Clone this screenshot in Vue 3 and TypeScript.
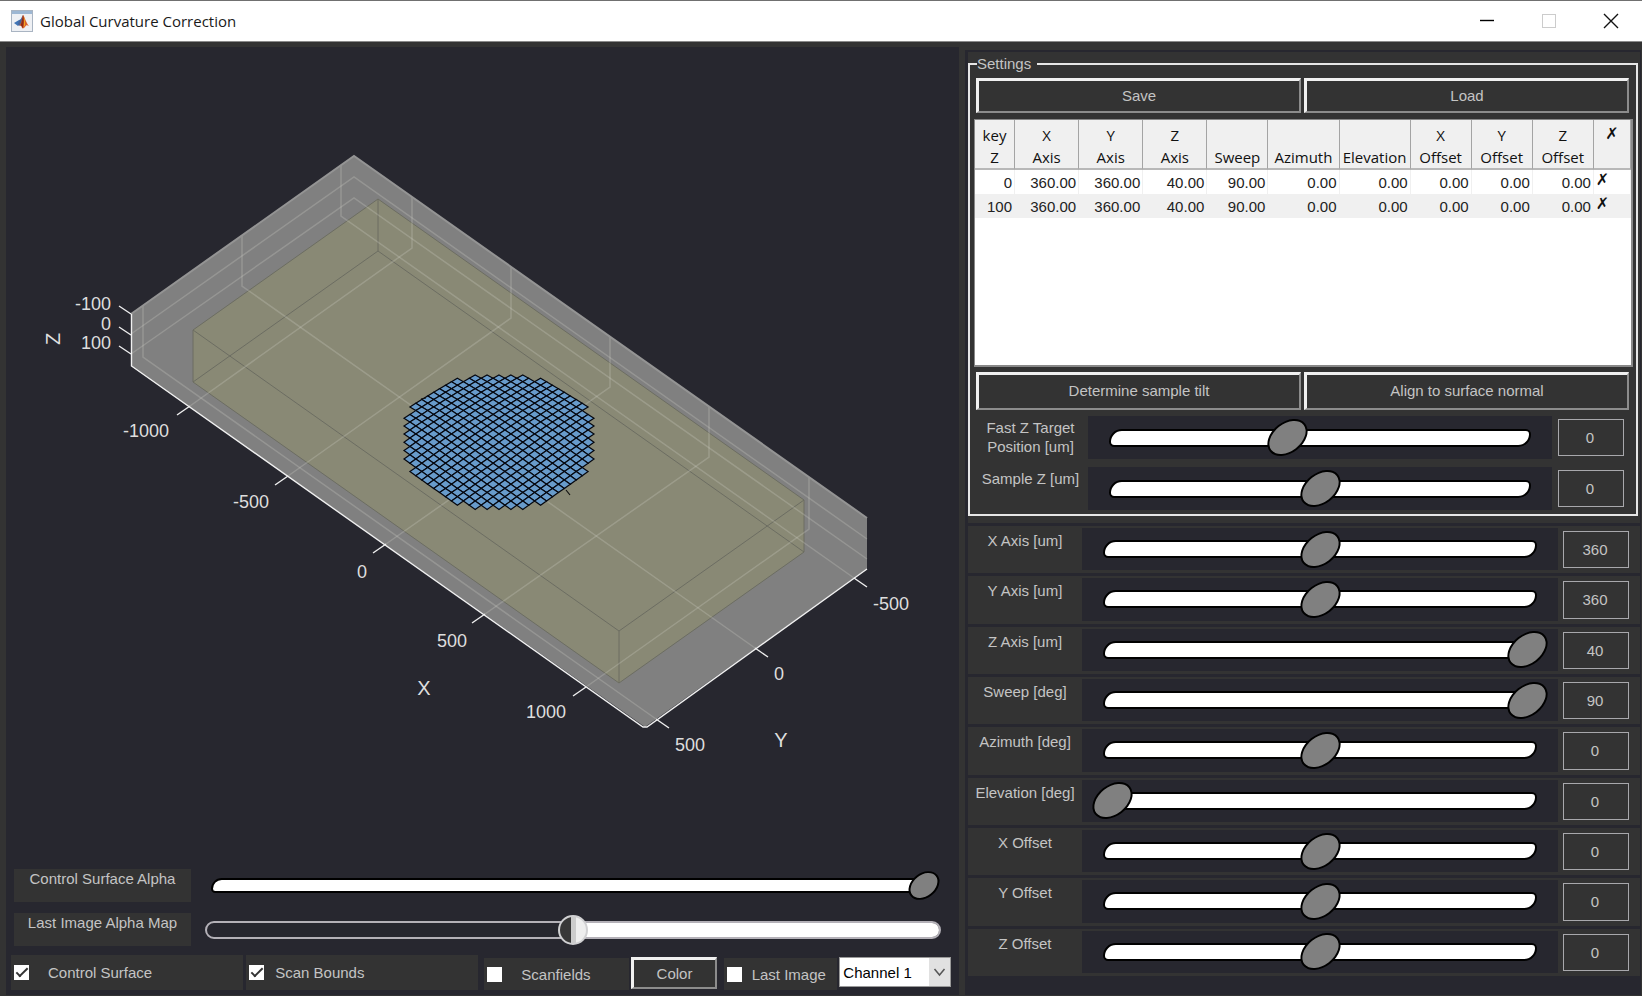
<script setup lang="ts">
import { reactive, ref } from 'vue'

interface SliderRow { id: string; label: string; pos: number; value: string }
interface Cell { points: string }

const targets = reactive<SliderRow[]>([
  { id: 'fast-z', label: 'Fast Z Target Position [um]', pos: 42, value: '0' },
  { id: 'sample-z', label: 'Sample Z [um]', pos: 50, value: '0' },
])

const params = reactive<SliderRow[]>([
  { id: 'x-axis', label: 'X Axis [um]', pos: 50, value: '360' },
  { id: 'y-axis', label: 'Y Axis [um]', pos: 50, value: '360' },
  { id: 'z-axis', label: 'Z Axis [um]', pos: 100, value: '40' },
  { id: 'sweep', label: 'Sweep [deg]', pos: 100, value: '90' },
  { id: 'azimuth', label: 'Azimuth [deg]', pos: 50, value: '0' },
  { id: 'elevation', label: 'Elevation [deg]', pos: 0, value: '0' },
  { id: 'x-offset', label: 'X Offset', pos: 50, value: '0' },
  { id: 'y-offset', label: 'Y Offset', pos: 50, value: '0' },
  { id: 'z-offset', label: 'Z Offset', pos: 50, value: '0' },
])

const headers: string[][] = [
  ['key', 'Z'], ['X', 'Axis'], ['Y', 'Axis'], ['Z', 'Axis'], ['Sweep'], ['Azimuth'],
  ['Elevation'], ['X', 'Offset'], ['Y', 'Offset'], ['Z', 'Offset'],
]
const rows: string[][] = [
  ['0', '360.00', '360.00', '40.00', '90.00', '0.00', '0.00', '0.00', '0.00', '0.00'],
  ['100', '360.00', '360.00', '40.00', '90.00', '0.00', '0.00', '0.00', '0.00', '0.00'],
]

const surfaceAlpha = ref(100)
const imageAlpha = ref(50)
const showSurface = ref(true)
const showBounds = ref(true)
const showFields = ref(false)
const showImage = ref(false)
const channel = ref('Channel 1')

// Curved control surface: a disc of lattice cells, seen from above at an angle.
function project(u: number, v: number): string {
  const s = u + v
  const d = u - v
  const x = 499 + 5.94 * d
  const y = s > 0 ? 438 + 4.2 * s : 438 + 4.05 * s + 0.02 * s * s
  return `${x.toFixed(1)},${y.toFixed(1)}`
}

const cells: Cell[] = []
for (let u = -11; u <= 11; u++) {
  for (let v = -11; v <= 11; v++) {
    const d = Math.abs(u - v)
    const s = Math.abs(u + v)
    if (u * u + v * v > 137 || d > 15 || s > 16 || (d === 15 && s > 5)) continue
    const h = 0.5
    cells.push({
      points: [project(u - h, v - h), project(u + h, v - h), project(u + h, v + h), project(u - h, v + h)].join(' '),
    })
  }
}

const ticks: string[] = [
  'M119 306L131 314', 'M119 327L131 335', 'M119 346L131 354',
  'M190 406L177 415', 'M288 476L275 485', 'M386 544L373 553', 'M485 614L472 623', 'M586 687L573 696',
  'M656 719L669 728', 'M755 648L768 657', 'M854 578L867 587',
]
const grid: string[] = [
  'M131 334L354 177L867 539', 'M131 354L354 198L867 559',
  'M190 406L412 248V197', 'M288 476L511 318V267', 'M386 544L610 387V336', 'M485 614L709 457V406', 'M586 687L809 529V477',
  'M656 719L143 357V305', 'M755 648L242 286V235', 'M854 578L341 216V165',
]
</script>

<template>
  <div class="window">
    <header class="titlebar">
      <svg class="logo" viewBox="0 0 22 22" aria-hidden="true">
        <rect x="0.5" y="0.5" width="21" height="21" fill="#eef0f4" stroke="#a9b4c2" />
        <rect x="1" y="1" width="20" height="3" fill="#9db7d3" />
        <path d="M3 13l5-3 3-1-2 5-2 2z" fill="#3f74b5" />
        <path d="M8 11c2-1 3-5 4-6l-1 8-3 3-1-2z" fill="#48659a" />
        <path d="M12 5c1 0 3 8 6 11-2-1-3-1-4 1-1 1-2 2-3 1 0-2-1-3-3-2 3-3 3-8 4-11z" fill="#d9642b" />
        <path d="M12 5c1 3 1 8 0 12l-1 1c0-2-1-3-2-2 2-3 2-8 3-11z" fill="#8f2b16" />
        <path d="M13 7c1 3 1 5 1 8l-1 2c0-3 0-6 0-10z" fill="#f5a623" />
      </svg>
      <h1>Global Curvature Correction</h1>
      <div class="controls">
        <button type="button" aria-label="Minimize"><svg viewBox="0 0 16 16"><path d="M1 7.500h14" stroke="#000" stroke-width="1.4" /></svg></button>
        <button type="button" aria-label="Maximize" disabled><svg viewBox="0 0 16 16"><rect x="1.5" y="1.5" width="13" height="13" fill="none" stroke="#ccc" /></svg></button>
        <button type="button" aria-label="Close"><svg viewBox="0 0 16 16"><path d="M1 1l14 14M15 1L1 15" stroke="#111" stroke-width="1.4" /></svg></button>
      </div>
    </header>

    <main class="body">
      <section class="view">
        <svg class="plot" viewBox="6 47 953 810" preserveAspectRatio="xMidYMin meet" role="img" aria-label="3D view of control surface">
          <polygon points="131,314 354,156 867,518 867,569 645,727 131,366" fill="#808080" />
          <polygon points="193,330 378,199 804,500 804,552 619,683 193,382" fill="#898975" />
          <g fill="none" stroke="#6c6d62" stroke-width="1">
            <path d="M193 330L378 199L804 500V552L619 683L193 382ZM193 330L619 631V683M619 631L804 500" />
            <path d="M378 199V251L193 382M378 251L804 552" />
          </g>
          <g fill="none" stroke="#d8d8d0" stroke-opacity="0.24" stroke-width="1.5">
            <path v-for="g in grid" :key="g" :d="g" />
          </g>
          <path d="M131 314L354 156L867 518" fill="none" stroke="#949494" stroke-width="2" />
          <g fill="none" stroke="#f0f0f0" stroke-width="1.4">
            <path d="M131.500 314V366L643 727H647L867 569" />
            <path v-for="t in ticks" :key="t" :d="t" />
          </g>
          <g fill="#689bcb" stroke="#05070f" stroke-width="1.2">
            <polygon v-for="c in cells" :key="c.points" :points="c.points" />
          </g>
          <path d="M566 490L570 495M421 399L426 398" stroke="#111" stroke-width="1.2" />
          <g class="labels" text-anchor="end">
            <text x="111" y="310">-100</text>
            <text x="111" y="330">0</text>
            <text x="111" y="349">100</text>
            <text x="169" y="437">-1000</text>
            <text x="269" y="508">-500</text>
            <text x="367" y="578">0</text>
            <text x="467" y="647">500</text>
            <text x="566" y="718">1000</text>
          </g>
          <g class="labels">
            <text x="873" y="610">-500</text>
            <text x="774" y="680">0</text>
            <text x="675" y="751">500</text>
          </g>
          <g class="names" text-anchor="middle">
            <text x="424" y="695">X</text>
            <text x="781" y="747">Y</text>
            <text transform="translate(60 339) rotate(-90)">Z</text>
          </g>
        </svg>

        <div class="alpha">
          <label for="surface-alpha">Control Surface Alpha</label>
          <div class="slider small">
            <div class="track"></div>
            <input id="surface-alpha" v-model="surfaceAlpha" type="range" min="0" max="100" />
          </div>
        </div>
        <div class="alpha">
          <label for="image-alpha">Last Image Alpha Map</label>
          <div class="slider round">
            <div class="track"><div class="rest" :style="{ width: 100 - imageAlpha + '%' }"></div></div>
            <input id="image-alpha" v-model="imageAlpha" type="range" min="0" max="100" />
          </div>
        </div>

        <div class="options">
          <label class="check wide first"><input v-model="showSurface" type="checkbox" />Control Surface</label>
          <label class="check wide bounds"><input v-model="showBounds" type="checkbox" />Scan Bounds</label>
          <label class="check fields"><input v-model="showFields" type="checkbox" />Scanfields</label>
          <button type="button" class="bevel color">Color</button>
          <label class="check image"><input v-model="showImage" type="checkbox" />Last Image</label>
          <div class="select">
            <select v-model="channel" aria-label="Channel">
              <option>Channel 1</option>
              <option>Channel 2</option>
            </select>
            <svg viewBox="0 0 20 28" aria-hidden="true"><path d="M5 11l5 6 5-6" fill="none" stroke="#555" stroke-width="1.5" /></svg>
          </div>
        </div>
      </section>

      <section class="side">
        <fieldset>
          <legend>Settings</legend>
          <div class="pair">
            <button type="button" class="bevel">Save</button>
            <button type="button" class="bevel">Load</button>
          </div>
          <div class="tablebox">
            <table>
              <colgroup>
                <col class="c-key" /><col class="c-axis" /><col class="c-axis" /><col class="c-axis" /><col class="c-off" />
                <col class="c-ang" /><col class="c-ang" /><col class="c-off" /><col class="c-off" /><col class="c-off" /><col class="c-del" />
              </colgroup>
              <thead>
                <tr>
                  <th v-for="(h, i) in headers" :key="i" scope="col"><span v-for="w in h" :key="w">{{ w }}</span></th>
                  <th scope="col" class="del">✗</th>
                </tr>
              </thead>
              <tbody>
                <tr v-for="r in rows" :key="r[0]">
                  <td v-for="(c, i) in r" :key="i">{{ c }}</td>
                  <td class="del"><button type="button" aria-label="Remove row">✗</button></td>
                </tr>
              </tbody>
            </table>
          </div>
          <div class="pair tall">
            <button type="button" class="bevel">Determine sample tilt</button>
            <button type="button" class="bevel">Align to surface normal</button>
          </div>
          <div class="targets">
            <div v-for="p in targets" :key="p.id" class="param">
              <label :for="p.id">{{ p.label }}</label>
              <div class="slider">
                <div class="track"></div>
                <input :id="p.id" v-model="p.pos" type="range" min="0" max="100" />
              </div>
              <input v-model="p.value" class="value" type="text" :aria-label="p.label + ' value'" />
            </div>
          </div>
        </fieldset>

        <div class="params">
          <div v-for="p in params" :key="p.id" class="param">
            <label :for="p.id">{{ p.label }}</label>
            <div class="slider">
              <div class="track"></div>
              <input :id="p.id" v-model="p.pos" type="range" min="0" max="100" />
            </div>
            <input v-model="p.value" class="value" type="text" :aria-label="p.label + ' value'" />
          </div>
        </div>
      </section>
    </main>
  </div>
</template>

<style>
body { margin: 0; background: #333; }
</style>

<style scoped>
* { box-sizing: border-box; }
.window {
  min-height: 100vh; display: flex; flex-direction: column; background: #333;
  font: 15px/19px "Liberation Sans", Arial, sans-serif; color: #c4c4c4;
}
button, input, select { font: inherit; color: inherit; margin: 0; }

.titlebar {
  height: 42px; flex: none; display: flex; align-items: center; padding: 0 23px 0 11px;
  background: #fff; border-top: 1px solid #707070; border-bottom: 1px solid #8a8a8a;
}
.logo { width: 22px; height: 22px; }
h1 { margin: 0 auto 0 7px; font: 15px/22px "Open Sans", "Noto Sans", sans-serif; color: #1a1a1a; }
.controls { display: flex; gap: 46px; }
.controls button { border: 0; padding: 0; background: none; width: 16px; height: 16px; }
.controls svg { display: block; width: 16px; height: 16px; }

.body {
  flex: 1; display: grid; grid-template-columns: 953fr 676fr; gap: 6px; padding: 5px 1px 1px 6px;
}
.view { background: #27272f; display: flex; flex-direction: column; min-width: 0; padding: 0 8px 5px 5px; }
.plot { flex: 1 1 500px; height: 500px; min-height: 0; display: block; margin: 0 -8px 10px -5px; }
.labels { font-size: 18px; fill: #dedede; }
.names { font-size: 20px; fill: #dedede; }

.alpha { display: grid; grid-template-columns: 177px 1fr; gap: 14px; height: 33px; margin: 0 10px 11px 3px; }
.alpha + .alpha { margin-bottom: 9px; }
.alpha > label { background: #333; text-align: center; }

.slider { display: grid; align-items: center; background: #27272f; padding: 0 8px; min-width: 0; }
.slider > * { grid-area: 1 / 1; }
.track {
  height: 18px; margin: 0 13px; background: #fff; border: 2px solid #000; border-radius: 15px 6px 15px 6px;
}
.slider input { appearance: none; display: block; width: 100%; height: 31px; background: none; }
.slider input::-webkit-slider-thumb {
  appearance: none; box-sizing: border-box; width: 45px; height: 31px; background: #808080;
  border: 2px solid #000; border-radius: 50%; transform: rotate(-38deg);
}
.small { padding: 0; }
.small .track { height: 15px; margin: 0 6px; }
.small input::-webkit-slider-thumb { width: 34px; height: 25px; }
.round { padding: 0; }
.round .track {
  height: 18px; margin: 0; border: 2px solid #b4b1b8; border-radius: 9px; background: #27272f; overflow: hidden;
  display: flex; justify-content: flex-end;
}
.round .rest { background: #fff; }
.round input::-webkit-slider-thumb {
  width: 30px; height: 30px; transform: none; border: 2px solid #d0d0d2;
  background: linear-gradient(90deg, #383838 0 11px, #ccc 11px 16px, #eee 16px);
}

.options { display: flex; gap: 2px; height: 35px; align-items: stretch; }
.check { display: flex; align-items: center; background: #333; padding-left: 3px; gap: 11px; white-space: nowrap; }
.check input {
  appearance: none; width: 15px; height: 15px; background: #fff; display: grid; place-items: center; flex: none;
}
.check input:checked::before {
  content: ""; width: 10px; height: 4px; border: solid #333; border-width: 0 0 2px 2px; transform: translateY(-2px) rotate(-45deg);
}
.wide { flex: 234 1 0; }
.first { gap: 19px; }
.bounds { margin-left: 1px; }
.fields { flex: 145 1 0; margin: 3px 0 0 4px; gap: 19px; }
.color { flex: 82 1 0; margin: 2px 0 1px; }
.image { flex: 113 1 0; margin: 3px 0 0 5px; gap: 10px; }
.select { flex: 114 1 0; display: grid; margin: 2px 0 3px; }
.select > * { grid-area: 1 / 1; }
.select select {
  appearance: none; width: 100%; background: #fff; color: #000; border: 1px solid #999; border-radius: 0; padding: 0 24px 0 3px;
}
.select svg { justify-self: end; width: 21px; height: 28px; margin-right: 1px; align-self: center; background: #e1e1e1; pointer-events: none; }

.bevel {
  background: #333; border: solid; border-width: 3px 2px 2px 3px; border-color: #f0f0f0 #8c8c8c #8c8c8c #f0f0f0; padding: 0; min-width: 0;
}

.side {
  margin-top: 3px; background: #333; border: 2px solid #27272f; border-width: 2px 1px 2px 3px;
  display: flex; flex-direction: column; min-width: 0;
}
fieldset { min-width: 0; margin: 2px 2px 2px 0; padding: 4px 3px 4px 4px; border: 2px solid #e6e6e6; }
legend { margin-left: 3px; padding: 0 6px 0 0; line-height: 20px; }
.pair { display: grid; grid-template-columns: 1fr 1fr; gap: 3px; height: 35px; margin: 0 4px 0 2px; }
.pair .bevel { padding-bottom: 2px; }
.tall { height: 38px; }
.tablebox { height: 248px; margin: 6px 0 5px; background: #fff; border: 1px solid #888; border-right-width: 2px; border-bottom-width: 2px; }
table { width: 100%; table-layout: fixed; border-collapse: separate; border-spacing: 0; color: #222; }
.c-key { width: 40px; }
.c-axis { width: 64px; }
.c-off { width: 61px; }
.c-ang { width: 71px; }
.c-del { width: 37px; }
th {
  height: 50px; padding: 0; vertical-align: bottom; background: #f0f0f0; border-right: 1px solid #a4a4a4; border-bottom: 2px solid #b8b8b8;
  font: 15px/22px "Open Sans", "Noto Sans", sans-serif; color: #111;
}
th span { display: block; }
td { height: 24px; padding: 0 2px 0 0; text-align: right; border-right: 1px solid #f0f0f0; }
tbody tr:nth-child(even) { background: #f0f0f0; }
th.del { vertical-align: top; padding-top: 3px; }
td.del { text-align: left; padding: 0 0 0 2px; vertical-align: top; }
.del, .del button { font-family: "DejaVu Sans", sans-serif; font-size: 16px; color: #111; }
.del button { display: block; border: 0; background: none; padding: 0; line-height: 20px; }

.targets { display: grid; gap: 8px; margin-top: 6px; }
.targets .param { grid-template-columns: 114px 1fr 81px; height: 43px; }
.targets .param label { padding: 2px 5px 0 4px; }
.targets .value { margin: 3px 9px 3px 6px; }

.param { display: grid; }
.param label { text-align: center; }
.value {
  min-width: 0; background: #333; border: 1px solid #a8a8ac; border-radius: 0; text-align: center; padding: 0 2px 0 0;
}
.params {
  flex: 1; display: grid; grid-template-rows: repeat(9, 1fr); gap: 3px; background: #27272f;
  border-top: 3px solid #27272f; padding-bottom: 17px; margin-top: 5px;
}
.params .param { background: #333; grid-template-columns: 114px 1fr 82px; min-height: 42px; }
.params .param label { padding-top: 5px; }
.params .slider { margin: 2px 0 3px; }
.params .value { margin: 5px 11px 5px 5px; }
</style>
